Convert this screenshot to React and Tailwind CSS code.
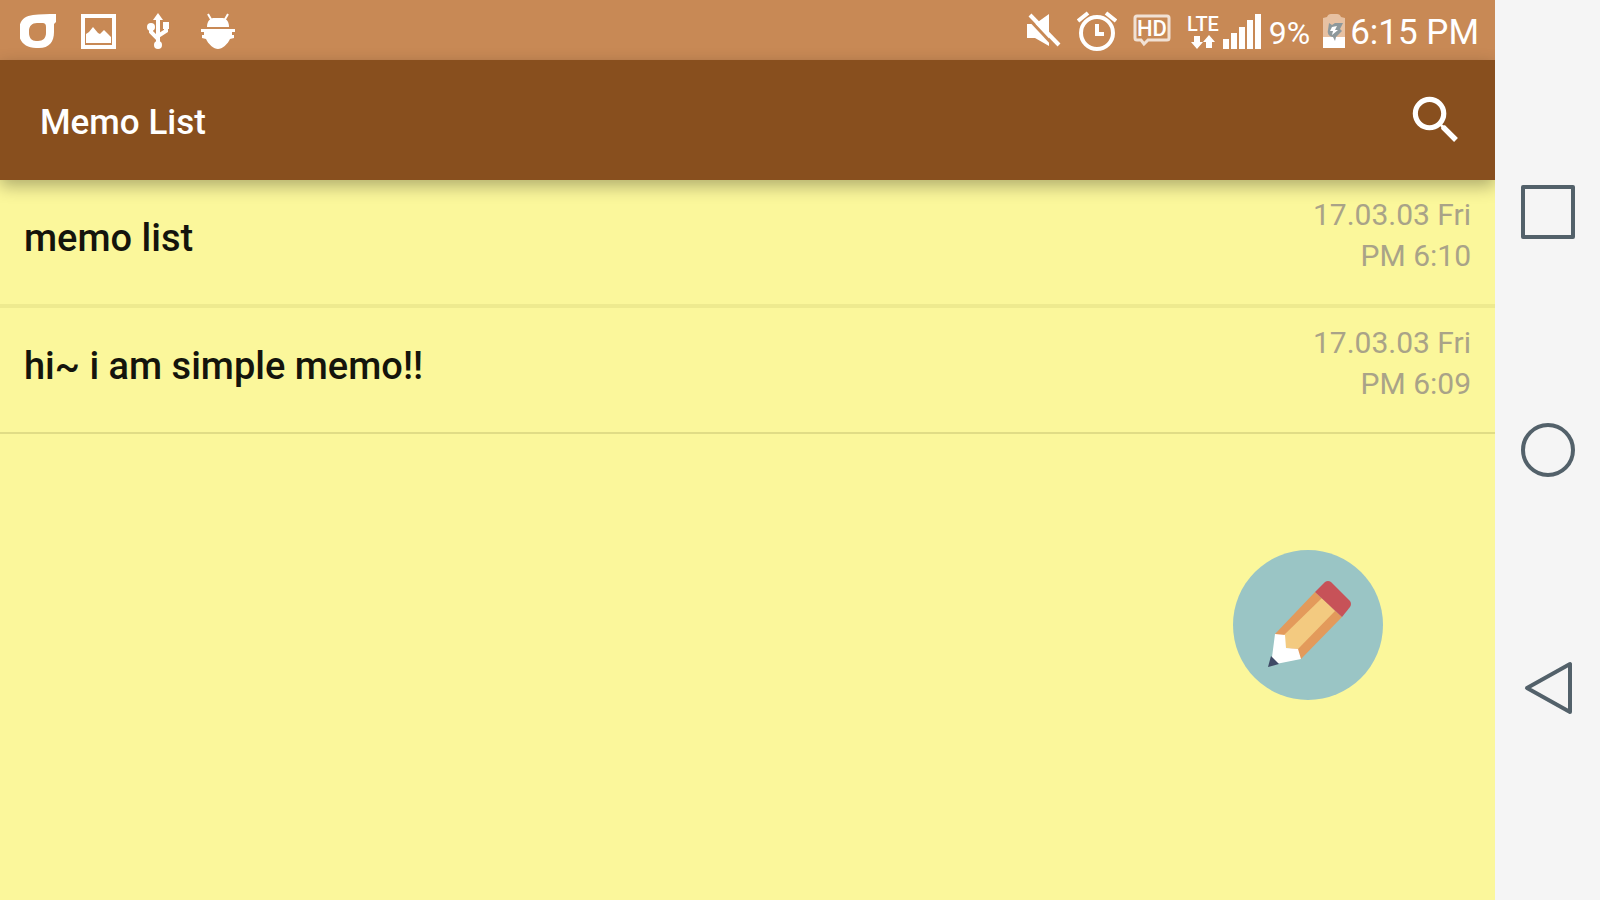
import { MdSearch } from "react-icons/md";

const MEMOS = [
  { title: "memo list", date: "17.03.03 Fri", time: "PM 6:10" },
  { title: "hi~ i am simple memo!!", date: "17.03.03 Fri", time: "PM 6:09" },
];

const SIGNAL_BARS = [10, 16, 22, 29, 35];

function CarrierIcon() {
  return (
    <svg viewBox="0 0 36 36" className="size-9" fill="#fff">
      <path
        fillRule="evenodd"
        d="M37 1l-1 8-2 2v8c0 10-5 16-15 16h-3C6 35-1 29-1 20v-2C-1 8 4 3 13 2c7-1 16-1 24-1zM17 10c-5 0-8 3-8 8v2c0 5 3 8 7 8h2c5 0 8-3 8-8v-6c0-3-1-4-4-4z"
      />
    </svg>
  );
}

function PictureIcon() {
  return (
    <svg viewBox="0 0 36 36" className="size-9" fill="#fff">
      <path fillRule="evenodd" d="M1 1h35v35H1zM5 5v27h27V5z" />
      <path d="M6 30v-9l3-2 4-5 5 6 2 1 4-4 4 4 3 3v6z" />
    </svg>
  );
}

function UsbIcon() {
  return (
    <svg viewBox="0 0 36 36" className="size-9" fill="#fff">
      <path d="M18 0l5 7H13z" />
      <circle cx="18" cy="32" r="4" />
      <path d="M23 9h6v7h-6z" />
      <circle cx="11" cy="14" r="4" />
      <path
        d="M18 4v26M11 14v5l7 7M26 14v4l-8 5"
        fill="none"
        stroke="#fff"
        strokeWidth="4"
      />
    </svg>
  );
}

function AndroidIcon() {
  return (
    <svg viewBox="0 0 36 36" className="size-9" fill="#fff">
      <path d="M7 14c0-5 2-8 6-9h10c4 1 6 4 6 9z" />
      <path d="M8 1l4 7M28 1l-4 7" stroke="#fff" strokeWidth="2" />
      <path d="M1 16h34v3H1zM4 19h28v3H4zM2 22h32v3l-4 1c-2 5-8 10-12 10S8 31 6 26l-4-1z" />
    </svg>
  );
}

function MuteIcon() {
  return (
    <svg viewBox="0 0 36 36" className="size-9">
      <path d="M2 11h8L24 1v32L10 25H2z" fill="#fff" />
      <path d="M2 4l29 31" stroke="#c88955" strokeWidth="3" />
      <path d="M5 2l29 30" stroke="#fff" strokeWidth="4" />
    </svg>
  );
}

function AlarmIcon() {
  return (
    <svg
      viewBox="0 0 40 40"
      className="size-10"
      fill="none"
      stroke="#fff"
      strokeWidth="4"
    >
      <circle cx="20" cy="22" r="16" />
      <path d="M20 13v10h7" />
      <path d="M1 10l10-8M39 10L29 2" />
    </svg>
  );
}

function HdIcon() {
  return (
    <svg viewBox="0 0 38 36" className="h-9 w-[38px]">
      <path
        d="M4 3h30q2 0 2 2v20q0 2-2 2H15l-4 4-3-4H4q-2 0-2-2V5q0-2 2-2z"
        fill="none"
        stroke="#fff"
        strokeOpacity="0.75"
        strokeWidth="3"
      />
      <text
        x="19"
        y="23"
        textAnchor="middle"
        fontSize="22"
        fontWeight="500"
        fill="#fff"
      >
        HD
      </text>
    </svg>
  );
}

function LteIcon() {
  return (
    <svg viewBox="0 0 32 36" className="h-9 w-8" fill="#fff">
      <text x="16" y="18" textAnchor="middle" fontSize="20" fontWeight="500">
        LTE
      </text>
      <path d="M7 23h6v6h3l-6 7-6-7h3zM19 35h6v-6h3l-6-7-6 7h3z" />
    </svg>
  );
}

function SignalIcon() {
  return (
    <svg viewBox="0 0 38 36" className="h-9 w-[38px]" fill="#fff">
      {SIGNAL_BARS.map((height, index) => (
        <rect
          key={height}
          x={index * 8}
          y={36 - height}
          width="6"
          height={height}
        />
      ))}
    </svg>
  );
}

function BatteryIcon() {
  return (
    <svg viewBox="0 0 24 36" className="h-9 w-6">
      <path
        d="M1 5l4-1q1-3 4-3h6q3 0 4 3l4 1v20H1z"
        fill="#efcfb5"
        fillOpacity="0.8"
      />
      <path d="M1 24h22v11H1z" fill="#fff" />
      <path
        d="M7 10l3 2 3-2 8 0-3 6 2 2-6 6-1 4-2-4c-4 0-6-4-5-7z"
        fill="#8d989b"
      />
      <path d="M10 14l5-1-2 4h3l-6 5 1-4H8z" fill="#fff" />
    </svg>
  );
}

function PencilIcon() {
  return (
    <svg viewBox="0 0 150 150" className="size-full">
      <path d="M82 42l27 25-41 42-26-25z" fill="#e39a5b" />
      <path d="M89 48l13 13-37 38-12-1-3-12z" fill="#f3ca80" />
      <path d="M42 84l10 1 1 13 12 1 3 10-30 6z" fill="#fff" />
      <path d="M38 106l-3 11 11-3z" fill="#3f4a66" />
      <path
        d="M82 42l10-10q3-2 6 0l19 19q2 3 0 6l-8 10z"
        fill="#c75258"
      />
    </svg>
  );
}

function StatusBar() {
  return (
    <div className="flex h-15 items-center justify-between bg-[#c88955] pl-5 pr-4 pt-px text-white">
      <div className="flex items-center gap-6">
        <CarrierIcon />
        <PictureIcon />
        <UsbIcon />
        <AndroidIcon />
      </div>

      <div className="flex items-center">
        <div className="mr-1 flex items-center gap-4">
          <MuteIcon />
          <AlarmIcon />
          <HdIcon />
          <LteIcon />
        </div>
        <SignalIcon />
        <span className="ml-2 mr-3 pt-1 text-[32px] leading-9">9%</span>
        <BatteryIcon />
        <time className="ml-1 pt-1 text-[35px] leading-9">6:15 PM</time>
      </div>
    </div>
  );
}

function NavButton({ label, children }) {
  return (
    <button type="button" aria-label={label} className="size-14">
      <svg
        viewBox="0 0 56 56"
        className="size-full"
        fill="none"
        stroke="#53616a"
        strokeWidth="4"
        strokeLinejoin="round"
      >
        {children}
      </svg>
    </button>
  );
}

export default function App() {
  return (
    <div className="flex min-h-screen bg-[#f5f5f5] font-['Roboto',sans-serif]">
      <div className="relative flex min-w-0 flex-1 flex-col overflow-hidden bg-[#fbf79b]">
        <StatusBar />

        <header className="relative flex h-30 items-center justify-between bg-[#884f1e] pl-10 pr-7 text-white shadow-[0_6px_16px_rgba(0,0,0,0.3)]">
          <h1 className="pt-1.5 text-[35px] font-medium">Memo List</h1>
          <button type="button" aria-label="Search">
            <MdSearch className="size-[62px]" />
          </button>
        </header>

        <main>
          <ul>
            {MEMOS.map((memo) => (
              <li
                key={memo.title}
                className="border-b-4 border-[#eeea8f] last:border-b-2 last:border-[#e0dc86]"
              >
                <a
                  href="#memo"
                  className="flex items-center justify-between px-6 pb-7 pt-3.5"
                >
                  <span className="pt-1.5 text-[38px] font-medium text-[#14140c]">
                    {memo.title}
                  </span>
                  <span className="text-right text-[30px] leading-[41px] text-[#a9a388]">
                    <span className="block">{memo.date}</span>
                    <span className="block">{memo.time}</span>
                  </span>
                </a>
              </li>
            ))}
          </ul>
        </main>

        <button
          type="button"
          aria-label="Write memo"
          className="absolute bottom-[200px] right-28 size-[150px] rounded-full bg-[#9ac5c5]"
        >
          <PencilIcon />
        </button>
      </div>

      <nav className="flex w-[105px] shrink-0 flex-col items-center justify-between py-46">
        <NavButton label="Recent apps">
          <path d="M3 3h50v50H3z" />
        </NavButton>
        <NavButton label="Home">
          <circle cx="28" cy="28" r="25" />
        </NavButton>
        <NavButton label="Back">
          <path d="M50 4v48L7 28z" />
        </NavButton>
      </nav>
    </div>
  );
}
